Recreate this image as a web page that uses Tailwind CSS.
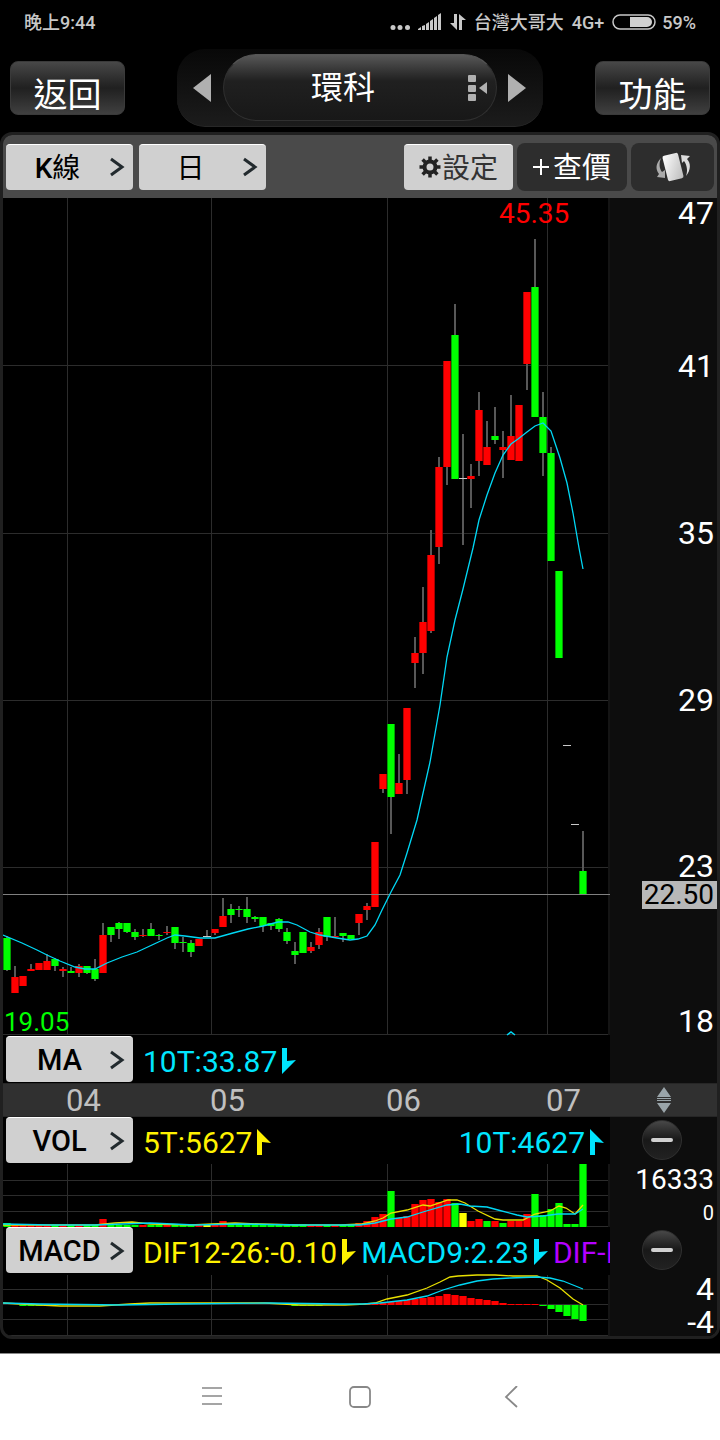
<!DOCTYPE html>
<html lang="zh-Hant">
<head>
<meta charset="utf-8">
<meta name="viewport" content="width=device-width, initial-scale=1">
<title>環科 K線</title>
<script src="https://cdn.jsdelivr.net/npm/@tailwindcss/browser@4"></script>
</head>
<body class="flex min-h-screen flex-col bg-black font-['Roboto','Noto_Sans_CJK_TC',sans-serif] text-white">

<!-- Status bar -->
<div class="flex h-11 items-center justify-between pr-6 pl-6 text-[18px] font-medium text-[#c8c8c8]">
  <span>晚上9:44</span>
  <div class="flex items-center gap-2">
    <svg class="h-5 w-5" viewBox="0 0 20 20" fill="currentColor" aria-hidden="true"><circle cx="3" cy="15.500" r="2.500"/><circle cx="10" cy="15.500" r="2.500"/><circle cx="17.500" cy="15.500" r="2.500"/></svg>
    <svg class="h-5 w-6" viewBox="0 0 24 20" fill="currentColor" aria-hidden="true"><path d="M0 17l3-2v3H0zM4 14l3-1v5H4zM8 12l3-2v8H8zM12 9l3-2v11h-3zM16 6l3-2v14h-3zM20 3l3-2v17h-3z"/></svg>
    <svg class="h-5 w-4" viewBox="0 0 16 20" fill="currentColor" aria-hidden="true"><path d="M4 2h3v16L0 11h4zM9 18V2l7 6h-4v10z"/></svg>
    <span>台灣大哥大</span>
    <span>4G+</span>
    <svg class="h-[18px] w-11" viewBox="0 0 44 18" aria-hidden="true"><rect x="1" y="2" width="42" height="14" rx="7" fill="none" stroke="#c8c8c8" stroke-width="1.500"/><path d="M18 4h17a5 5 0 0 1 0 10H18z" fill="#d0d0d0"/></svg>
    <span class="-ml-0.5">59%</span>
  </div>
</div>

<!-- Title bar -->
<header class="flex h-[88px] items-center justify-between px-[10px]">
  <button class="h-[54px] w-[115px] overflow-hidden rounded-lg border border-[#3a3a3a] bg-linear-to-b from-[#484848] via-[#202020] to-[#404040] pt-2 text-[34px] leading-[44px]"><span class="block h-[38px] overflow-hidden">返回</span></button>
  <div class="flex h-[78px] w-[366px] items-center justify-between rounded-[28px] border-b border-[#282828] bg-linear-to-b from-[#080808] to-[#1c1c1c] px-4">
    <button aria-label="上一檔"><svg class="h-8 w-5" viewBox="0 0 20 32" aria-hidden="true"><path d="M0 16L18 2v28z" fill="#b0b0b0"/></svg></button>
    <button class="flex h-[67px] w-[274px] items-center rounded-full border border-[#303030] border-t-[#555] bg-linear-to-b from-[#585858] via-[#202020] via-40% to-[#181818] px-2 text-[32px]">
      <span class="flex-1 pr-[14px] text-center">環科</span>
      <svg class="h-7 w-5" viewBox="0 0 20 28" fill="#b0b0b0" aria-hidden="true"><rect x="0" y="1" width="8" height="7" rx="1"/><rect x="0" y="11" width="8" height="7" rx="1"/><rect x="0" y="20" width="8" height="7" rx="1"/><path d="M11 14l8-6v12z"/></svg>
    </button>
    <button aria-label="下一檔"><svg class="h-8 w-5" viewBox="0 0 20 32" aria-hidden="true"><path d="M19 16L1 2v28z" fill="#b0b0b0"/></svg></button>
  </div>
  <button class="h-[54px] w-[115px] overflow-hidden rounded-lg border border-[#3a3a3a] bg-linear-to-b from-[#484848] via-[#202020] to-[#404040] pt-2 text-[34px] leading-[44px]"><span class="block h-[38px] overflow-hidden">功能</span></button>
</header>

<main class="mb-[14px] overflow-hidden rounded-xl border-[3px] border-[#202020]">
  <!-- Toolbar -->
  <div class="flex h-[63px] items-center justify-between bg-[#4a4a4a] px-[3px]">
    <div class="flex gap-[6px]">
      <button class="flex h-[46px] w-[127px] items-center rounded border-t border-white bg-[#d0d0d0] pr-2 text-[28px] text-black"><span class="flex-1 pt-1"><span class="font-medium">K</span>線</span><svg class="h-5 w-4" viewBox="0 0 16 20" aria-hidden="true"><path d="M2 2l11 8-11 8" fill="none" stroke="#222a2e" stroke-width="3"/></svg></button>
      <button class="flex h-[46px] w-[127px] items-center rounded border-t border-white bg-[#d0d0d0] pr-2 text-[28px] text-black"><span class="flex-1 pt-1">日</span><svg class="h-5 w-4" viewBox="0 0 16 20" aria-hidden="true"><path d="M2 2l11 8-11 8" fill="none" stroke="#222a2e" stroke-width="3"/></svg></button>
    </div>
    <div class="flex items-center gap-1">
      <button class="flex h-[46px] w-[109px] items-center justify-center gap-px rounded border-t border-white bg-[#d0d0d0] text-[28px] text-[#333]">
        <svg class="h-[22px] w-[22px]" viewBox="-11 -11 22 22" fill="none" stroke="#222" aria-hidden="true"><circle r="5.500" stroke-width="4"/><path stroke-width="3.500" d="M0-10.500V-6M0 6v4.500M-10.500 0H-6M6 0h4.500M-7.400-7.400l3 3M4.400 4.400l3 3M7.400-7.400l-3 3M-4.400 4.400l-3 3"/></svg><span class="pt-1">設定</span></button>
      <button class="flex h-[48px] w-[110px] items-center justify-center gap-1 rounded-lg bg-[#2d2d2d] text-[29px]"><svg class="h-4 w-4" viewBox="0 0 16 16" aria-hidden="true"><path d="M8 0v16M0 8h16" stroke="#fff" stroke-width="2"/></svg><span class="pt-1">查價</span></button>
      <button class="flex h-[48px] w-[83px] items-center justify-center rounded-lg bg-[#2d2d2d]" aria-label="旋轉">
        <svg class="h-8 w-9" viewBox="0 0 36 32" aria-hidden="true"><defs><linearGradient id="ph" x2="1" y2="1"><stop stop-color="#fff"/><stop offset="1" stop-color="#bbb"/></linearGradient></defs><rect x="10" y="3" width="16" height="26" rx="2" fill="url(#ph)" transform="rotate(-14 18 16)"/><path d="M6 7C1 12 0 18 4 23l-2 3 8 1V19l-3 2C4 17 4 12 6 7z" fill="#aaa"/><path d="M31 25c5-6 5-13 1-17l3-3-9-1 1 8 2-2c3 4 4 10 2 15z" fill="#ddd"/></svg>
      </button>
    </div>
  </div>

  <!-- Price chart -->
  <section class="flex">
    <div class="min-w-0 flex-1">
      <svg id="price" class="block h-[838px] w-full" viewBox="3 198 607 838" preserveAspectRatio="none" role="img" aria-label="K線圖">
        <path d="M3 365.500H610M3 533.500H610M3 700.500H610M3 867.500H610M3 1034.500H610M67.500 198V1035M211.500 198V1035M387.500 198V1035M547.500 198V1035" stroke="#2c2c2c"/>
        <path d="M609 198V1035" stroke="#141414" stroke-width="2"/>
        <g id="candles"></g>
        <path d="M3 894.500H610" stroke="#808080"/>
        <polyline fill="none" stroke="#00d8f5" stroke-width="1.300" points="3,935 22,943 37,950 47,955 60,961 75,967 85,969 95,969 107,963 122,957 137,952 152,945 167,938 175,935 185,936 200,938 215,938 233,933 248,929 263,926 278,922 288,922 297,925 310,932 320,935 337,938 350,940 358,939 367,936 375,925 382,910 391,892 400,875 407,853 417,820 430,762 440,705 447,657 455,620 463,589 473,548 479,520 487,495 495,473 503,455 511,444 518,439 527,432 535,426 543,423 551,431 560,458 567,483 573,513 579,548 583,569"/>
        <path d="M507 1035l4-3 4 3" fill="none" stroke="#00d8f5" stroke-width="1.500"/>
        <text x="499" y="223" font-size="28" fill="#ff0000">45.35</text>
        <text x="4" y="1031" font-size="26" fill="#00ff00">19.05</text>
      </svg>
      <div class="flex h-[47px] items-start gap-[10px] pl-[3px] text-[30px] text-[#00e5ff]">
        <button class="flex h-[46px] w-[127px] items-center rounded border-t border-white bg-[#d0d0d0] pr-2 text-[29px] font-medium text-black"><span class="flex-1 pt-0.5 pl-1">MA</span><svg class="h-5 w-4" viewBox="0 0 16 20" aria-hidden="true"><path d="M2 2l11 8-11 8" fill="none" stroke="#222a2e" stroke-width="3"/></svg></button>
        <span class="flex h-[50px] items-center gap-[5px]">10T:33.87<svg class="h-[26px] w-[14px]" viewBox="0 0 14 26" fill="currentColor" aria-hidden="true"><path d="M0 0h5v13l9-1L0 26z"/></svg></span>
      </div>
    </div>
    <div class="grid w-[107px] grid-rows-[30px_153px_167px_167px_166px_28px_127px_47px] items-end justify-items-end bg-[#0d0d0d] text-[32px] leading-[30px]">
      <span class="pr-[3px]">47</span><span class="pr-[3px]">41</span><span class="pr-[3px]">35</span><span class="pr-[3px]">29</span><span class="pr-[3px]">23</span>
      <span class="h-7 w-[75px] bg-[#b8b8b8] pr-[3px] text-right text-[28px] leading-7 text-black">22.50</span>
      <span class="pr-[3px]">18</span>
    </div>
  </section>

  <!-- Month axis -->
  <div class="flex h-[34px] items-center border-y border-[#262626] bg-[#303030] text-[31px] leading-8 text-[#c0c0c0]">
    <div class="grid flex-1 grid-cols-[63fr_144fr_176fr_160fr_64fr] pt-0.5">
      <span></span><span>04</span><span>05</span><span>06</span><span>07</span>
    </div>
    <button class="flex w-[107px] justify-center" aria-label="調整高度"><svg class="h-[26px] w-[14px]" viewBox="0 0 14 26" fill="#9aa5aa" aria-hidden="true"><path d="M7 0l7 10H0zM0 11h14v1H0zM0 13h14v1H0zM0 16h14L7 26z"/></svg></button>
  </div>

  <!-- Volume -->
  <section class="flex">
    <div class="min-w-0 flex-1">
      <div class="flex h-[47px] items-start gap-[10px] pr-[6px] pl-[3px] text-[30px]">
        <button class="flex h-[46px] w-[127px] items-center rounded border-t border-white bg-[#d0d0d0] pr-2 text-[29px] font-medium text-black"><span class="flex-1 pt-0.5 pl-1">VOL</span><svg class="h-5 w-4" viewBox="0 0 16 20" aria-hidden="true"><path d="M2 2l11 8-11 8" fill="none" stroke="#222a2e" stroke-width="3"/></svg></button>
        <span class="flex h-[50px] items-center gap-[5px] text-[#fff200]">5T:5627<svg class="h-[26px] w-[14px]" viewBox="0 0 14 26" fill="currentColor" aria-hidden="true"><path d="M0 26h5V13l9 1L0 0z"/></svg></span>
        <span class="ml-auto flex h-[50px] items-center gap-[5px] text-[#00e5ff]">10T:4627<svg class="h-[26px] w-[14px]" viewBox="0 0 14 26" fill="currentColor" aria-hidden="true"><path d="M0 26h5V13l9 1L0 0z"/></svg></span>
      </div>
      <svg class="block h-[63px] w-full" viewBox="3 1164 607 63" preserveAspectRatio="none" role="img" aria-label="成交量">
        <path d="M3 1180.500H610M3 1195.500H610M3 1211.500H610M3 1226.500H610M67.500 1164V1227M211.500 1164V1227M387.500 1164V1227M547.500 1164V1227" stroke="#2c2c2c"/>
        <path d="M609 1164V1227" stroke="#141414" stroke-width="2"/>
        <g id="volume"></g>
        <polyline fill="none" stroke="#e8e000" stroke-width="1.300" points="3,1225 60,1225 95,1225 115,1223 132,1222 150,1224 190,1225 235,1223 260,1224 300,1225 340,1225 362,1224 375,1221 383,1218 391,1213 407,1210 423,1205 430,1206 448,1200 457,1200 465,1203 478,1211 495,1219 503,1220 523,1220 535,1214 550,1211 559,1206 566,1208 575,1214 583,1205"/>
        <polyline fill="none" stroke="#00d8f5" stroke-width="1.300" points="3,1224 50,1225 95,1225 150,1223 195,1225 240,1224 300,1225 360,1225 375,1223 391,1219 407,1217 423,1212 447,1205 460,1204 470,1206 487,1207 498,1210 517,1215 527,1217 543,1216 558,1214 575,1214 583,1209"/>
      </svg>
    </div>
    <div class="flex w-[107px] flex-col items-end bg-[#0d0d0d] pt-[3px] pr-[3px]">
      <button class="flex h-10 w-10 items-center justify-center self-center rounded-full border border-[#303030] bg-linear-to-b from-[#484848] via-[#181818] to-[#222]" aria-label="收合 VOL"><span class="h-1 w-[22px] rounded-full bg-[#d0d0d0]"></span></button>
      <span class="pt-[5px] text-[28px] leading-[30px]">16333</span>
      <span class="pt-1 text-[20px] leading-7">0</span>
    </div>
  </section>

  <!-- MACD -->
  <section class="flex">
    <div class="min-w-0 flex-1">
      <div class="flex h-[47px] items-start gap-[10px] overflow-hidden pl-[3px] text-[30px] whitespace-nowrap">
        <button class="flex h-[46px] w-[127px] shrink-0 items-center rounded border-t border-white bg-[#d0d0d0] pr-2 text-[29px] font-medium text-black"><span class="flex-1 pt-0.5 pl-1">MACD</span><svg class="h-5 w-4" viewBox="0 0 16 20" aria-hidden="true"><path d="M2 2l11 8-11 8" fill="none" stroke="#222a2e" stroke-width="3"/></svg></button>
        <div class="flex h-[50px] items-center gap-[5px]">
          <span class="flex items-center gap-[5px] text-[#fff200]">DIF12-26:-0.10<svg class="h-[26px] w-[14px]" viewBox="0 0 14 26" fill="currentColor" aria-hidden="true"><path d="M0 0h5v13l9-1L0 26z"/></svg></span>
          <span class="flex items-center gap-[5px] text-[#00e5ff]">MACD9:2.23<svg class="h-[26px] w-[14px]" viewBox="0 0 14 26" fill="currentColor" aria-hidden="true"><path d="M0 0h5v13l9-1L0 26z"/></svg></span>
          <span class="text-[#b400ff]">DIF-MACD</span>
        </div>
      </div>
      <svg class="block h-[62px] w-full" viewBox="3 1274 607 62" preserveAspectRatio="none" role="img" aria-label="MACD">
        <path d="M3 1289.500H610M3 1304.500H610M3 1319.500H610M3 1335.500H610M67.500 1275V1336M211.500 1275V1336M387.500 1275V1336M547.500 1275V1336" stroke="#2c2c2c"/>
        <path d="M609 1275V1336" stroke="#141414" stroke-width="2"/>
        <g id="macd"></g>
        <polyline fill="none" stroke="#e8e000" stroke-width="1.300" points="3,1303 20,1304 60,1306 100,1306 130,1304 150,1303 235,1303 265,1303 300,1305 345,1305 365,1304 375,1303 387,1299 407,1295 427,1288 440,1282 450,1277 458,1276 477,1275 495,1275 513,1276 537,1276 547,1280 560,1288 573,1299 583,1305"/>
        <polyline fill="none" stroke="#00d8f5" stroke-width="1.300" points="3,1303 40,1304 120,1305 180,1304 270,1303 340,1304 362,1304 380,1303 407,1300 427,1296 443,1290 460,1285 477,1281 493,1279 510,1278 537,1277 550,1278 563,1281 583,1289"/>
      </svg>
    </div>
    <div class="flex w-[107px] flex-col items-end bg-[#0d0d0d] pt-[3px] pr-[3px]">
      <button class="flex h-10 w-10 items-center justify-center self-center rounded-full border border-[#303030] bg-linear-to-b from-[#484848] via-[#181818] to-[#222]" aria-label="收合 MACD"><span class="h-1 w-[22px] rounded-full bg-[#d0d0d0]"></span></button>
      <span class="pt-1 text-[32px] leading-[30px]">4</span>
      <span class="pt-1 text-[32px] leading-[28px]">-4</span>
    </div>
  </section>
</main>

<!-- System navigation -->
<nav class="flex flex-1 justify-center gap-[126px] border-t border-[#888] bg-white pt-8 text-[#888]">
  <button class="h-[22px] w-6" aria-label="選單"><svg class="h-[22px] w-6" viewBox="0 0 24 22" aria-hidden="true"><path d="M4 2h20M4 10h20M4 18h20" stroke="currentColor" stroke-width="1.500"/></svg></button>
  <button class="h-[22px] w-6" aria-label="主畫面"><svg class="h-[22px] w-6" viewBox="0 0 24 22" aria-hidden="true"><rect x="2" y="1" width="20" height="20" rx="4" fill="none" stroke="currentColor" stroke-width="1.800"/></svg></button>
  <button class="h-[22px] w-6" aria-label="返回"><svg class="h-[22px] w-6" viewBox="0 0 24 22" aria-hidden="true"><path d="M19 0L8 11l11 10" fill="none" stroke="currentColor" stroke-width="1.800"/></svg></button>
</nav>

<script>
// Each candle: colour, body top, body bottom, wick top, wick bottom
const candles = `g 938 970 936 971|r 977 993 966 993|r 976 986 976 986|r 969 971 964 971|r 963 970 963 970|r 961 970 954 970|g 959 966 958 971|r 969 971 967 977|g 971 973 967 973|r 966 973 964 977|g 966 973 966 974|g 969 979 959 981|r 935 973 923 973|g 927 935 927 942|g 923 929 922 939|g 923 932 923 933|g 932 937 929 940|r 935 936 929 937|g 929 936 923 936|g 935 936 934 940|r 932 933 926 935|g 927 943 927 949|g 942 943 937 952|g 943 952 940 957|r 939 946 939 946|n 936 937 930 937|r 929 933 929 935|r 916 927 898 927|g 909 915 904 923|g 909 910 906 917|g 909 917 897 923|g 917 919 916 922|g 917 926 917 932|g 923 926 923 930|g 919 929 918 932|g 932 941 928 944|g 951 955 942 964|g 932 953 932 953|r 947 951 942 953|r 932 945 928 949|g 917 937 917 941|r 936 937 917 937|g 933 936 933 942|g 935 939 935 939|r 914 923 914 935|r 906 910 903 920|r 842 907 842 907|r 774 789 774 793|g 724 797 724 834|r 783 794 754 794|r 708 780 708 794|r 653 663 637 688|r 622 653 587 674|r 555 631 530 633|r 467 547 457 564|r 361 467 361 485|g 335 479 304 479|n 478 479 434 545|r 476 479 464 508|r 410 461 392 476|r 447 465 421 465|g 436 440 407 444|r 447 450 431 478|r 436 460 395 460|r 405 461 405 461|r 292 364 292 390|g 287 417 239 417|g 417 453 392 476|g 453 561 447 561|g 571 658 571 658|n 745 746 745 746|n 824 825 824 825|g 871 895 831 895`
  .split("|").map(s => s.split(" ").map((v, k) => k ? +v : v));
const fill = { r: "#ff0000", g: "#00ff00", n: "#c8c8c8", y: "#ffff00" };
const edge = { r: "#a80000", g: "#00a000", n: "#c8c8c8", y: "#b0b000" };
const rect = (x, y, w, h, c) => `<rect x="${x}" y="${y}" width="${w}" height="${h}" fill="${c}"/>`;
const bar = (i, top, bottom, c) => {
  const x = 3 + i * 8, h = bottom - top;
  return rect(x, top, 8, h, edge[c]) + rect(x + 1, top, 6, h, fill[c]);
};

document.getElementById("candles").innerHTML = candles.map(([c, t, b, wt, wb], i) =>
  (wb - wt > 1 ? rect(6 + i * 8, wt, 2, wb - wt, "#585858") : "") + bar(i, t, b, c)).join("");

// Volume bar tops; days not listed trade close to zero
const volumeTop = { 0: 1223, 12: 1219, 13: 1224, 27: 1221, 37: 1224, 44: 1223, 45: 1221, 46: 1217, 47: 1214, 48: 1191, 49: 1218, 50: 1216, 51: 1204, 52: 1200, 53: 1199, 54: 1202, 55: 1199, 56: 1203, 57: 1213, 58: 1221, 59: 1219, 60: 1221, 61: 1221, 62: 1223, 63: 1221, 64: 1221, 65: 1214, 66: 1194, 67: 1215, 68: 1209, 69: 1203, 70: 1224, 71: 1224, 72: 1164 };
const volumeColor = { 57: "y", 60: "g", 61: "r", 62: "g", 70: "g", 71: "g", 25: "y" };
document.getElementById("volume").innerHTML = candles.map(([c], i) =>
  bar(i, volumeTop[i] || 1225, 1227, volumeColor[i] || c)).join("");

// Histogram extents around the zero line at 1305
const hist = { 45: 1304, 46: 1304, 47: 1303, 48: 1302, 49: 1301, 50: 1300, 51: 1299, 52: 1298, 53: 1297, 54: 1296, 55: 1294, 56: 1295, 57: 1296, 58: 1298, 59: 1299, 60: 1300, 61: 1301, 62: 1303, 63: 1304, 64: 1304, 65: 1304, 66: 1304, 67: 1306, 68: 1309, 69: 1312, 70: 1316, 71: 1319, 72: 1321, 2: 1306, 3: 1306, 4: 1306, 36: 1306, 37: 1306, 38: 1306, 39: 1306 };
document.getElementById("macd").innerHTML = Object.entries(hist).map(([i, y]) =>
  y < 1305 ? bar(+i, y, 1305, "r") : bar(+i, 1305, y, "g")).join("");
</script>
</body>
</html>
